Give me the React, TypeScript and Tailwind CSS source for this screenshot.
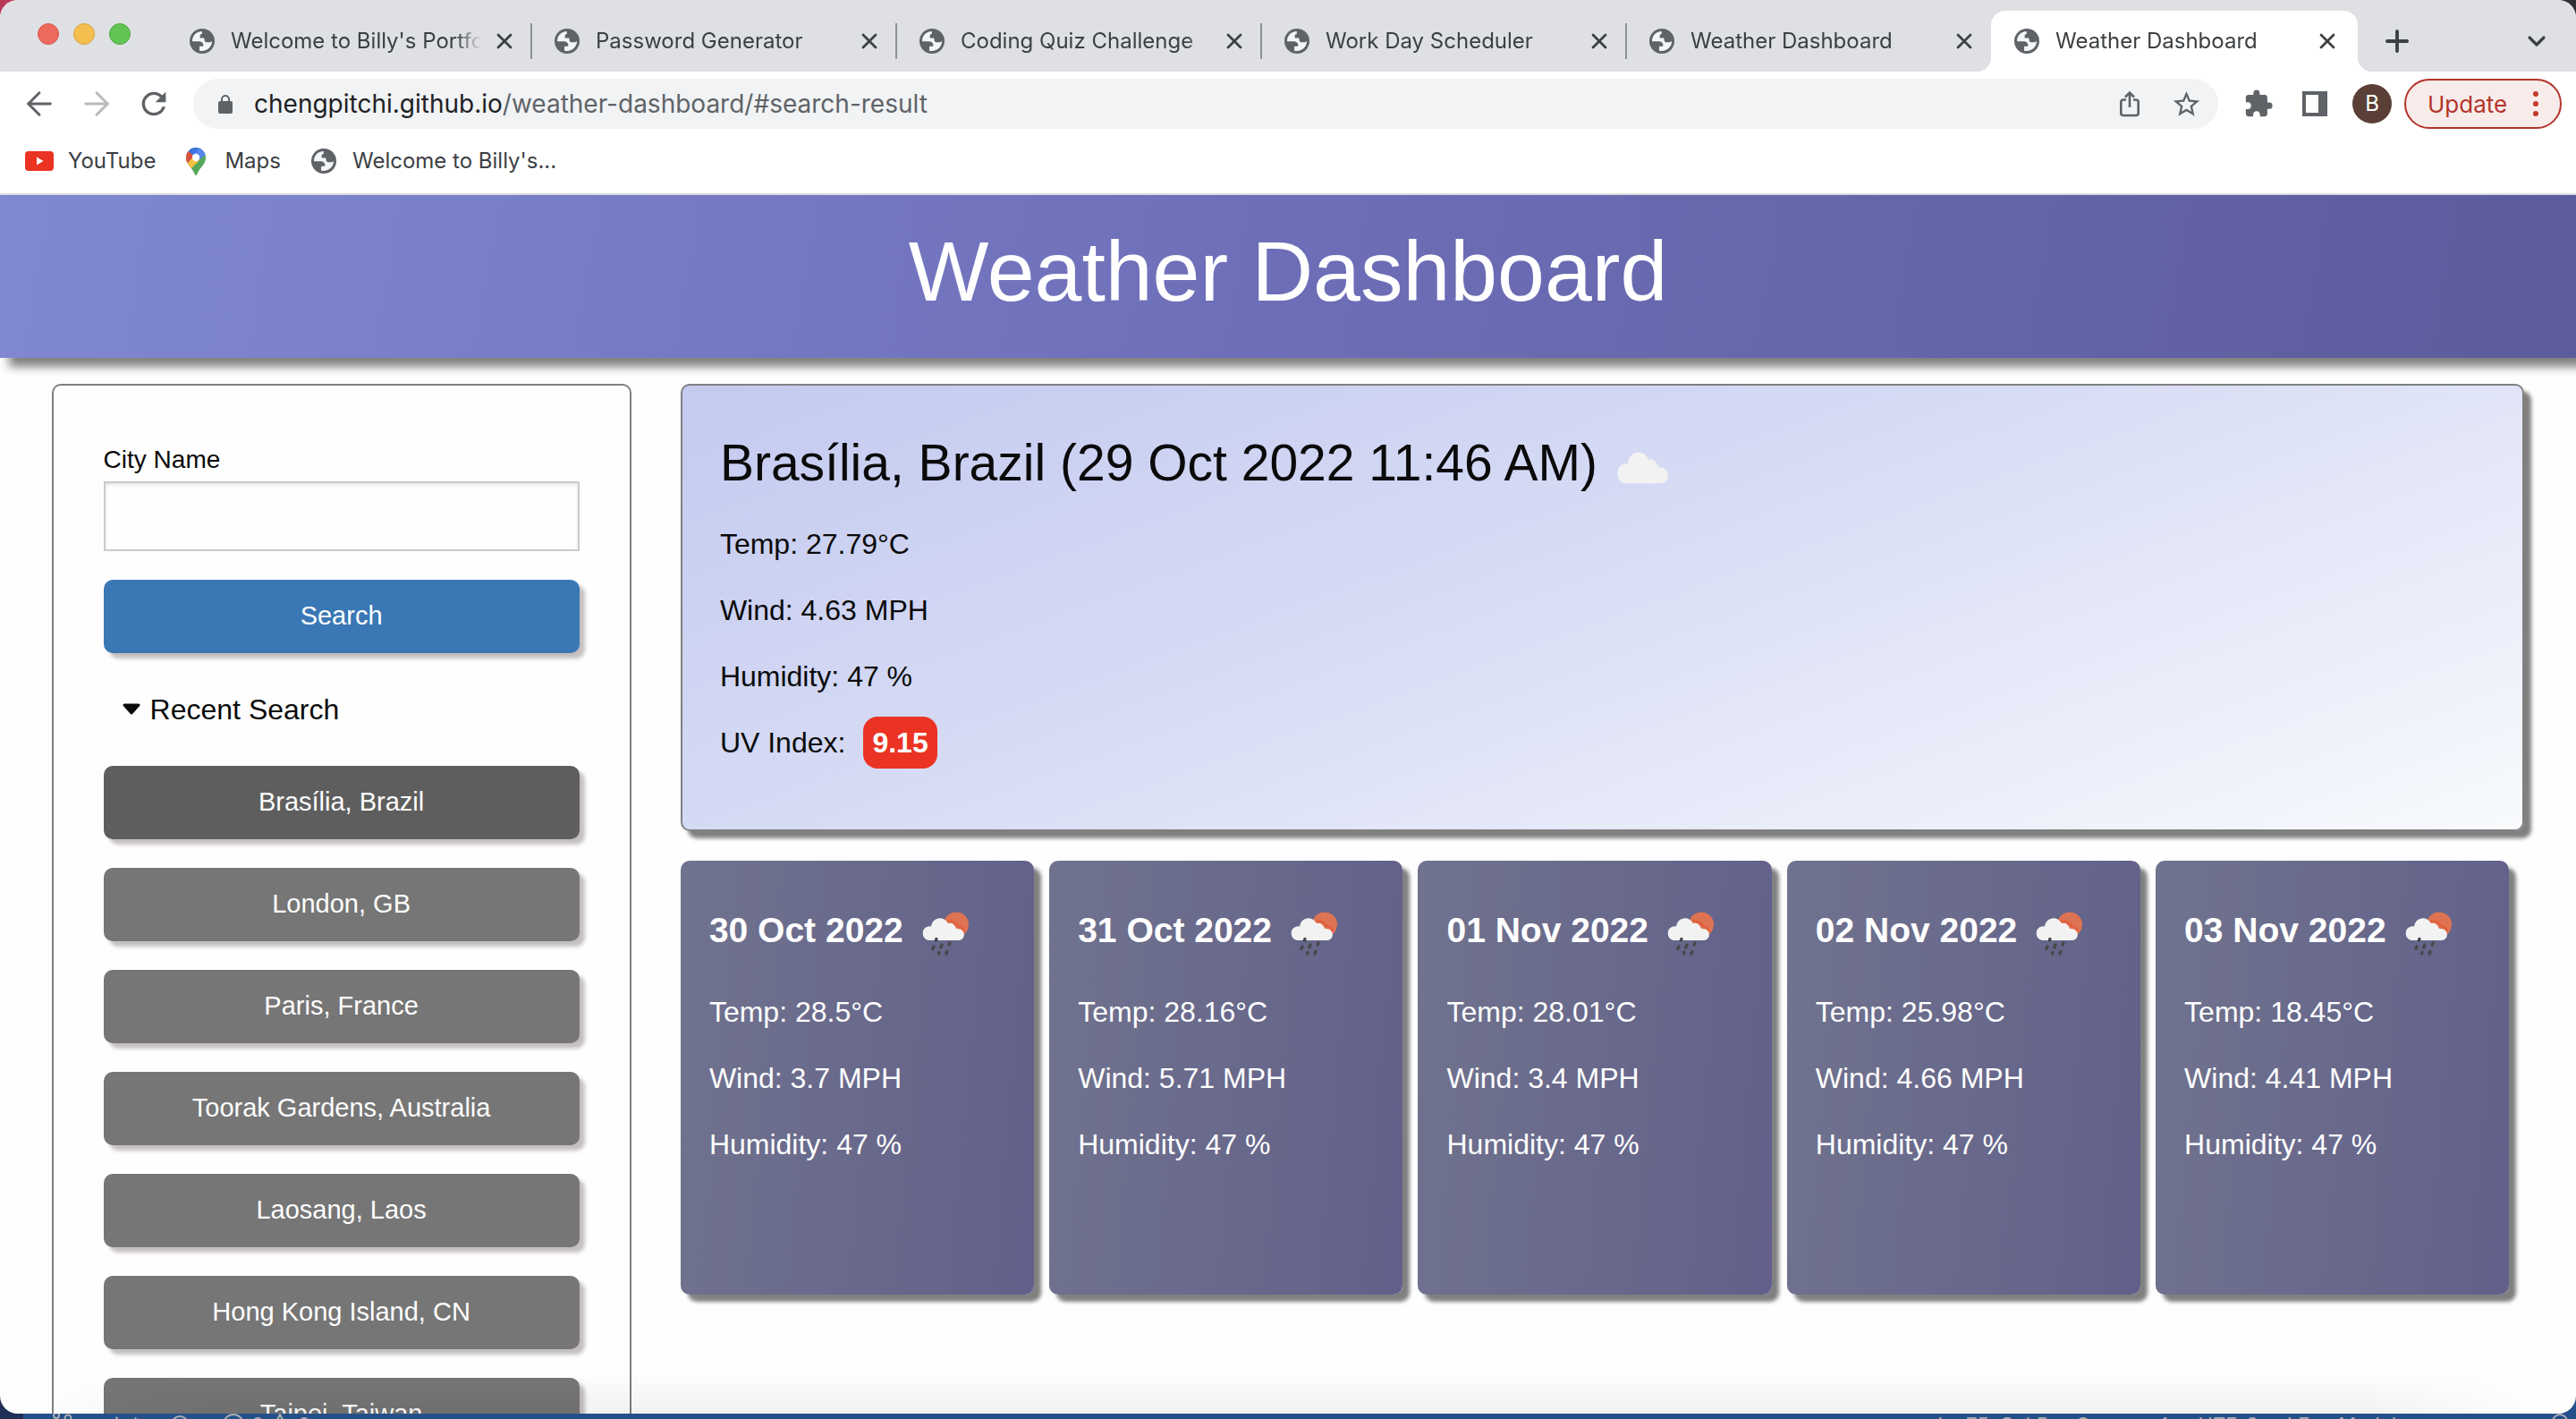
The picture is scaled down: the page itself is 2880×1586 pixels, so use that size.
import React from "react";
import { ArrowLeft, ArrowRight, ChevronDown, Plus, X } from "lucide-react";
import { MdExtension, MdRefresh, MdStarBorder } from "react-icons/md";

const tabs = [
  "Welcome to Billy's Portfolio",
  "Password Generator",
  "Coding Quiz Challenge",
  "Work Day Scheduler",
  "Weather Dashboard",
  "Weather Dashboard",
];

const recent = [
  "Brasília, Brazil",
  "London, GB",
  "Paris, France",
  "Toorak Gardens, Australia",
  "Laosang, Laos",
  "Hong Kong Island, CN",
  "Taipei, Taiwan",
];

const forecast = [
  { date: "30 Oct 2022", temp: "28.5", wind: "3.7" },
  { date: "31 Oct 2022", temp: "28.16", wind: "5.71" },
  { date: "01 Nov 2022", temp: "28.01", wind: "3.4" },
  { date: "02 Nov 2022", temp: "25.98", wind: "4.66" },
  { date: "03 Nov 2022", temp: "18.45", wind: "4.41" },
];

function Globe() {
  return (
    <svg viewBox="0 0 28 28" className="size-7 shrink-0" aria-hidden="true">
      <circle cx="14" cy="14" r="14" fill="#5f6368" />
      <path
        d="M13.6 3 C7.8 3.2 3.4 7.6 3 13.2 C3 13.9 3.2 14.2 3.8 14.2 H10.5 C13.5 14.2 15.4 15.8 15.4 18.6 C15.4 19.6 15 19.8 14.2 19.8 H11.8 C11.2 19.8 11 20.1 11 20.7 V24.2 C11 24.7 11.3 24.8 12 24.9 C19.5 25.8 25 20.5 25 14 C24.2 14.4 23.6 15.3 22 15.3 H19.6 C17.4 15.3 16.6 14 16.6 12.4 C16.6 11.2 16.4 10.6 15 10.6 H12.6 C11.8 10.6 11.6 10.2 11.6 9.4 V8.4 C11.6 6.6 12.6 6.2 14 5.8 Z"
        fill="#f4f5f6"
      />
    </svg>
  );
}

function Share() {
  return (
    <svg viewBox="0 0 24 30" className="h-[30px] w-6" fill="none" stroke="#5f6368" strokeWidth="2.6" aria-hidden="true">
      <path d="M8 10.5 H5 Q2.3 10.5 2.3 13 V25.5 Q2.3 28 5 28 H19 Q21.7 28 21.7 25.5 V13 Q21.7 10.5 19 10.5 H16" />
      <path d="M12 19 V3" />
      <path d="M7 7.5 L12 2.5 L17 7.5" />
    </svg>
  );
}

function MapsPin() {
  return (
    <svg viewBox="0 0 22 31" className="h-[31px] w-[22px]" aria-hidden="true">
      <defs>
        <clipPath id="pin">
          <path d="M11 0 A11 11 0 0 1 22 11 C22 16 19.6 18.8 16.6 22.6 C14 26 12.8 28.4 12.1 30.3 Q11 31.6 9.9 30.3 C9.2 28.4 8.2 26.2 5.4 22.6 C2.4 18.8 0 16 0 11 A11 11 0 0 1 11 0 Z" />
        </clipPath>
      </defs>
      <g clipPath="url(#pin)">
        <rect width="22" height="31" fill="#57a75b" />
        <path d="M0 20 L8.5 8 L16 13 L4.5 25 L0 25 Z" fill="#f3bf42" />
        <path d="M0 0 L3 3.5 L9.5 9 L0 18.5 Z" fill="#d95140" />
        <path d="M2.5 4 L6 0 H15 L9 9.5 Z" fill="#3a73e0" />
        <path d="M14.5 0 L22 2 V8 L13 15 L8 9 Z" fill="#5486ec" />
      </g>
      <circle cx="11" cy="11" r="4.2" fill="#fff" />
    </svg>
  );
}

function CloudShape() {
  return (
    <path
      d="M8 31 A8 8 0 0 1 7.5 15.5 Q9 15.2 11 15.5 A10 10 0 0 1 30 12 Q36 10.5 38.8 17.5 Q40 18.5 42 18.3 A6.4 6.4 0 0 1 42.5 31 Z"
      fill="#f2f2f2"
    />
  );
}

function Cloud() {
  return (
    <svg viewBox="0 4.5 49.5 27" className="h-[38px] w-[61px] shrink-0" preserveAspectRatio="none" role="img" aria-label="Cloudy">
      <CloudShape />
    </svg>
  );
}

function RainCloud() {
  return (
    <svg viewBox="0 0 54 64" className="h-16 w-[54px] shrink-0" role="img" aria-label="Rain">
      <g transform="translate(0 11)">
        <circle cx="39" cy="14.5" r="14" fill="#dd7353" />
        <path d="M27 12 Q36 8.5 40.5 15.5 Q46 16.5 48 22" fill="none" stroke="#e2603c" strokeWidth="2.5" />
        <g transform="translate(0 1)">
          <CloudShape />
        </g>
        <g stroke="#48484a" strokeWidth="3.4" strokeLinecap="round">
          <path d="M17 30.5 L16.4 32" />
          <path d="M14 39 L12.8 41.5" />
          <path d="M23 37 L21.8 40" />
          <path d="M32 35 L31.2 37" />
          <path d="M20 45.5 L19.4 47" />
          <path d="M29 44.5 L28 47" />
        </g>
      </g>
    </svg>
  );
}

function Tab({ title, index }: { title: string; index: number }) {
  const active = index === tabs.length - 1;
  return (
    <div
      className={
        active
          ? "relative flex h-[68px] w-[410px] items-center rounded-t-2xl bg-white pr-5 pl-[26px] before:absolute before:bottom-0 before:-left-4 before:size-4 before:bg-[radial-gradient(circle_at_0_0,transparent_16px,#fff_16px)] after:absolute after:-right-4 after:bottom-0 after:size-4 after:bg-[radial-gradient(circle_at_100%_0,transparent_16px,#fff_16px)]"
          : "relative flex h-[68px] w-[408px] items-center pr-4 pl-[26px]"
      }
    >
      <Globe />
      <span className="mr-3 ml-[18px] flex-1 overflow-hidden text-2xl whitespace-nowrap [mask-image:linear-gradient(to_right,#000_calc(100%-28px),transparent)]">
        {title}
      </span>
      <button aria-label={`Close ${title}`}>
        <X className="size-7" strokeWidth={2.4} />
      </button>
      {index < tabs.length - 2 && <span className="absolute -right-px h-10 w-0.5 bg-[#8d9094]" />}
    </div>
  );
}

function Browser() {
  return (
    <div className="shrink-0 font-[Inter,sans-serif] text-[#3c4043]">
      <div className="flex items-center bg-[#dfe0e4] pt-3">
        <div className="mt-3.5 mr-10 flex gap-4 self-start pl-[42px]">
          <span className="size-6 rounded-full border border-[#d5584c] bg-[#ec6a5e]" />
          <span className="size-6 rounded-full border border-[#d8a33c] bg-[#f4bf4f]" />
          <span className="size-6 rounded-full border border-[#51a73f] bg-[#61c554]" />
        </div>
        {tabs.map((t, i) => (
          <Tab key={i} title={t} index={i} />
        ))}
        <button aria-label="New tab" className="ml-[25px]">
          <Plus className="size-[38px]" strokeWidth={2.4} />
        </button>
        <button aria-label="Search tabs" className="mr-7 ml-auto">
          <ChevronDown className="size-8" strokeWidth={2.4} />
        </button>
      </div>
      <div className="flex h-[72px] items-center bg-white pr-4 pl-[23px]">
        <button aria-label="Back">
          <ArrowLeft className="size-[42px] text-[#5f6368]" strokeWidth={1.7} />
        </button>
        <button aria-label="Forward" className="ml-[22px]">
          <ArrowRight className="size-[42px] text-[#bababa]" strokeWidth={1.7} />
        </button>
        <button aria-label="Reload" className="ml-[23px]">
          <MdRefresh className="size-10 text-[#5f6368]" />
        </button>
        <div className="ml-[24px] flex h-14 flex-1 items-center rounded-full bg-[#f1f3f4] pr-[18px] pl-7">
          <svg viewBox="0 0 16 21" className="h-[21px] w-4" aria-hidden="true">
            <rect y="7" width="16" height="14" rx="2" fill="#5f6368" />
            <path d="M4 8 V4.8 A4 3.8 0 0 1 12 4.8 V8" fill="none" stroke="#5f6368" strokeWidth="2" />
          </svg>
          <span className="ml-6 flex-1 text-[28px] leading-9 text-[#5f6368]">
            <span className="text-[#202124]">chengpitchi.github.io</span>/weather-dashboard/#search-result
          </span>
          <button aria-label="Share">
            <Share />
          </button>
          <button aria-label="Bookmark this page" className="ml-[34px]">
            <MdStarBorder className="size-[35px] text-[#5f6368]" />
          </button>
        </div>
        <button aria-label="Extensions" className="ml-7">
          <MdExtension className="size-[34px] text-[#5f6368]" />
        </button>
        <button aria-label="Side panel" className="ml-8">
          <svg viewBox="0 0 28 28" className="size-7" aria-hidden="true">
            <path d="M0 0 H28 V28 H0 Z M4 4 V24 H18 V4 Z" fill="#5f6368" fillRule="evenodd" />
          </svg>
        </button>
        <button className="ml-7 size-11 rounded-full bg-[#5a3f37] text-2xl text-white">B</button>
        <button className="ml-3.5 flex h-14 w-44 items-center justify-between rounded-full border-2 border-[#b3342a] bg-[#f8eceb] pr-6 pl-6 text-[26px] text-[#b3342a]">
          Update
          <span className="flex flex-col gap-[5px]">
            <span className="size-1.5 rounded-full bg-[#c5392d]" />
            <span className="size-1.5 rounded-full bg-[#c5392d]" />
            <span className="size-1.5 rounded-full bg-[#c5392d]" />
          </span>
        </button>
      </div>
      <nav className="flex h-[66px] items-center border-b-2 border-[#dcdddf] bg-white pb-2 pl-7 text-2xl">
        <a href="#youtube" className="flex items-center gap-4">
          <svg viewBox="0 0 32 22" className="h-[22px] w-8" aria-hidden="true">
            <rect width="32" height="22" rx="4" fill="#ea3323" />
            <path d="M13 6.5 L20.5 11 L13 15.5 Z" fill="#fff" />
          </svg>
          YouTube
        </a>
        <a href="#maps" className="ml-[34px] flex items-center gap-[21px]">
          <MapsPin />
          Maps
        </a>
        <a href="#portfolio" className="ml-[34px] flex items-center gap-[18px]">
          <Globe />
          Welcome to Billy's...
        </a>
      </nav>
    </div>
  );
}

function Sidebar() {
  return (
    <aside className="w-[22.5vw] shrink-0 rounded-t-[10px] border-2 border-b-0 border-[#808080] px-14 pt-[59px]">
      <form onSubmit={(e) => e.preventDefault()}>
        <label htmlFor="city" className="block text-[28px] leading-[48px]">
          City Name
        </label>
        <input
          id="city"
          type="text"
          className="block h-[78px] w-full border-2 border-[#cacaca] bg-[#fefefe] px-4 text-[32px] shadow-[inset_0_2px_4px_rgba(10,10,10,0.1)]"
        />
        <button className="mt-8 h-[82px] w-full rounded-[10px] bg-[#3a78b5] text-[29px] text-white shadow-[6px_6px_4px_#c5bfbf]">
          Search
        </button>
      </form>
      <details open className="mt-[39px]">
        <summary className="flex items-center gap-2.5 pl-5 text-[32px] leading-[48px]">
          <svg viewBox="0 0 22 14" className="h-3.5 w-[22px]" aria-hidden="true">
            <path d="M3 2 H19 L11 11 Z" fill="#0a0a0a" stroke="#0a0a0a" strokeWidth="3" strokeLinejoin="round" />
          </svg>
          Recent Search
        </summary>
        <div className="mt-[39px] flex flex-col gap-8">
          {recent.map((city, i) => (
            <button
              key={city}
              className={
                i === 0
                  ? "h-[82px] rounded-[10px] bg-[#5e5e5e] text-[29px] text-white shadow-[6px_6px_4px_#c5bfbf]"
                  : "h-[82px] rounded-[10px] bg-[#767676] text-[29px] text-white shadow-[6px_6px_4px_#c5bfbf]"
              }
            >
              {city}
            </button>
          ))}
        </div>
      </details>
    </aside>
  );
}

function Today() {
  return (
    <section className="rounded-[10px] border-2 border-[#808080] bg-[linear-gradient(160deg,#c4caf0,#d5daf4_40%,#f8fafd)] px-[42px] pt-[46px] pb-[60px] text-[32px] leading-[74px] shadow-[8px_8px_4px_#808080]">
      <h2 className="mb-3.5 flex items-center gap-5 text-[57px] leading-[80px]">
        Brasília, Brazil (29 Oct 2022 11:46 AM)
        <span className="pt-2.5">
          <Cloud />
        </span>
      </h2>
      <p>Temp: 27.79°C</p>
      <p>Wind: 4.63 MPH</p>
      <p>Humidity: 47 %</p>
      <p className="flex items-center">
        UV Index:
        <span className="ml-5 rounded-2xl bg-[#ea3323] px-2.5 leading-[58px] font-bold text-white">9.15</span>
      </p>
    </section>
  );
}

function StatusBar() {
  return (
    <footer className="flex h-1.5 shrink-0 items-start overflow-hidden pr-2 pl-14 font-[Inter,sans-serif] text-[22px] leading-6 text-[#a9adb3]">
      <svg viewBox="0 0 26 24" className="h-6 w-[26px] shrink-0" fill="none" stroke="#a9adb3" strokeWidth="2" aria-hidden="true">
        <circle cx="7" cy="2" r="3" />
        <circle cx="20" cy="5" r="3.5" />
      </svg>
      <span className="ml-3.5">main*</span>
      <svg viewBox="0 0 24 24" className="ml-8 size-6 shrink-0" fill="none" stroke="#a9adb3" strokeWidth="2" aria-hidden="true">
        <circle cx="12" cy="12" r="9" />
      </svg>
      <svg viewBox="0 0 24 24" className="ml-9 size-6 shrink-0" fill="none" stroke="#a9adb3" strokeWidth="2" aria-hidden="true">
        <circle cx="12" cy="12" r="11" />
      </svg>
      <span className="ml-2">0</span>
      <svg viewBox="0 0 24 24" className="ml-1.5 size-6 shrink-0" fill="none" stroke="#a9adb3" strokeWidth="2" aria-hidden="true">
        <path d="M12 1 L23 22 H1 Z" />
      </svg>
      <span className="ml-2">0</span>
      <span className="mr-8 ml-auto">Ln 75, Col 5</span>
      <span className="mr-8">Spaces: 4</span>
      <span className="mr-8">UTF-8</span>
      <span className="mr-8">LF</span>
      <span className="mr-40">Module</span>
      <svg viewBox="0 0 20 24" className="h-6 w-5 shrink-0" fill="none" stroke="#a9adb3" strokeWidth="2" aria-hidden="true">
        <path d="M2 18 V9 A8 8 0 0 1 18 9 V18" />
      </svg>
    </footer>
  );
}

export default function App() {
  return (
    <div className="flex h-screen flex-col [background:linear-gradient(to_right,#b8385a_50%,#2e3033_50%)_top/100%_40px_no-repeat,linear-gradient(to_right,#1f2f55_26px,#245089_26px)]">
      <div className="relative flex min-h-0 flex-1 flex-col overflow-hidden rounded-[20px] bg-[#fefefe] font-['Liberation_Sans',Arial,sans-serif] text-[#0a0a0a]">
        <Browser />
        <header className="z-10 shrink-0 bg-[linear-gradient(100deg,#8088d2,#6d6eb7_50%,#5c5b9c)] pt-[18px] pb-[30px] text-center text-white shadow-[10px_10px_10px_#808080]">
          <h1 className="text-[95px] leading-[134px]">Weather Dashboard</h1>
        </header>
        <main className="flex min-h-0 flex-1 gap-[2%] overflow-hidden px-[2%] pt-[29px]">
          <Sidebar />
          <div className="flex flex-1 flex-col gap-[33px]">
            <Today />
            <section className="grid grid-cols-5 gap-[17px] pr-[17px]">
              {forecast.map((d) => (
                <article
                  key={d.date}
                  className="min-h-[485px] rounded-[10px] bg-[linear-gradient(95deg,#70738e,#62608a)] px-8 pt-[46px] text-[32px] leading-[74px] text-white shadow-[8px_8px_4px_#808080]"
                >
                  <h3 className="mb-[22px] flex items-center gap-5 text-[39px] leading-[64px] font-bold whitespace-nowrap">
                    {d.date}
                    <RainCloud />
                  </h3>
                  <p>Temp: {d.temp}°C</p>
                  <p>Wind: {d.wind} MPH</p>
                  <p>Humidity: 47 %</p>
                </article>
              ))}
            </section>
          </div>
        </main>
        <div className="pointer-events-none absolute inset-x-0 bottom-0 h-12 bg-linear-to-b from-transparent to-black/5 [mask-image:linear-gradient(to_right,transparent_40px,#000_240px,#000_calc(100%-240px),transparent_calc(100%-40px))]" />
      </div>
      <StatusBar />
    </div>
  );
}
